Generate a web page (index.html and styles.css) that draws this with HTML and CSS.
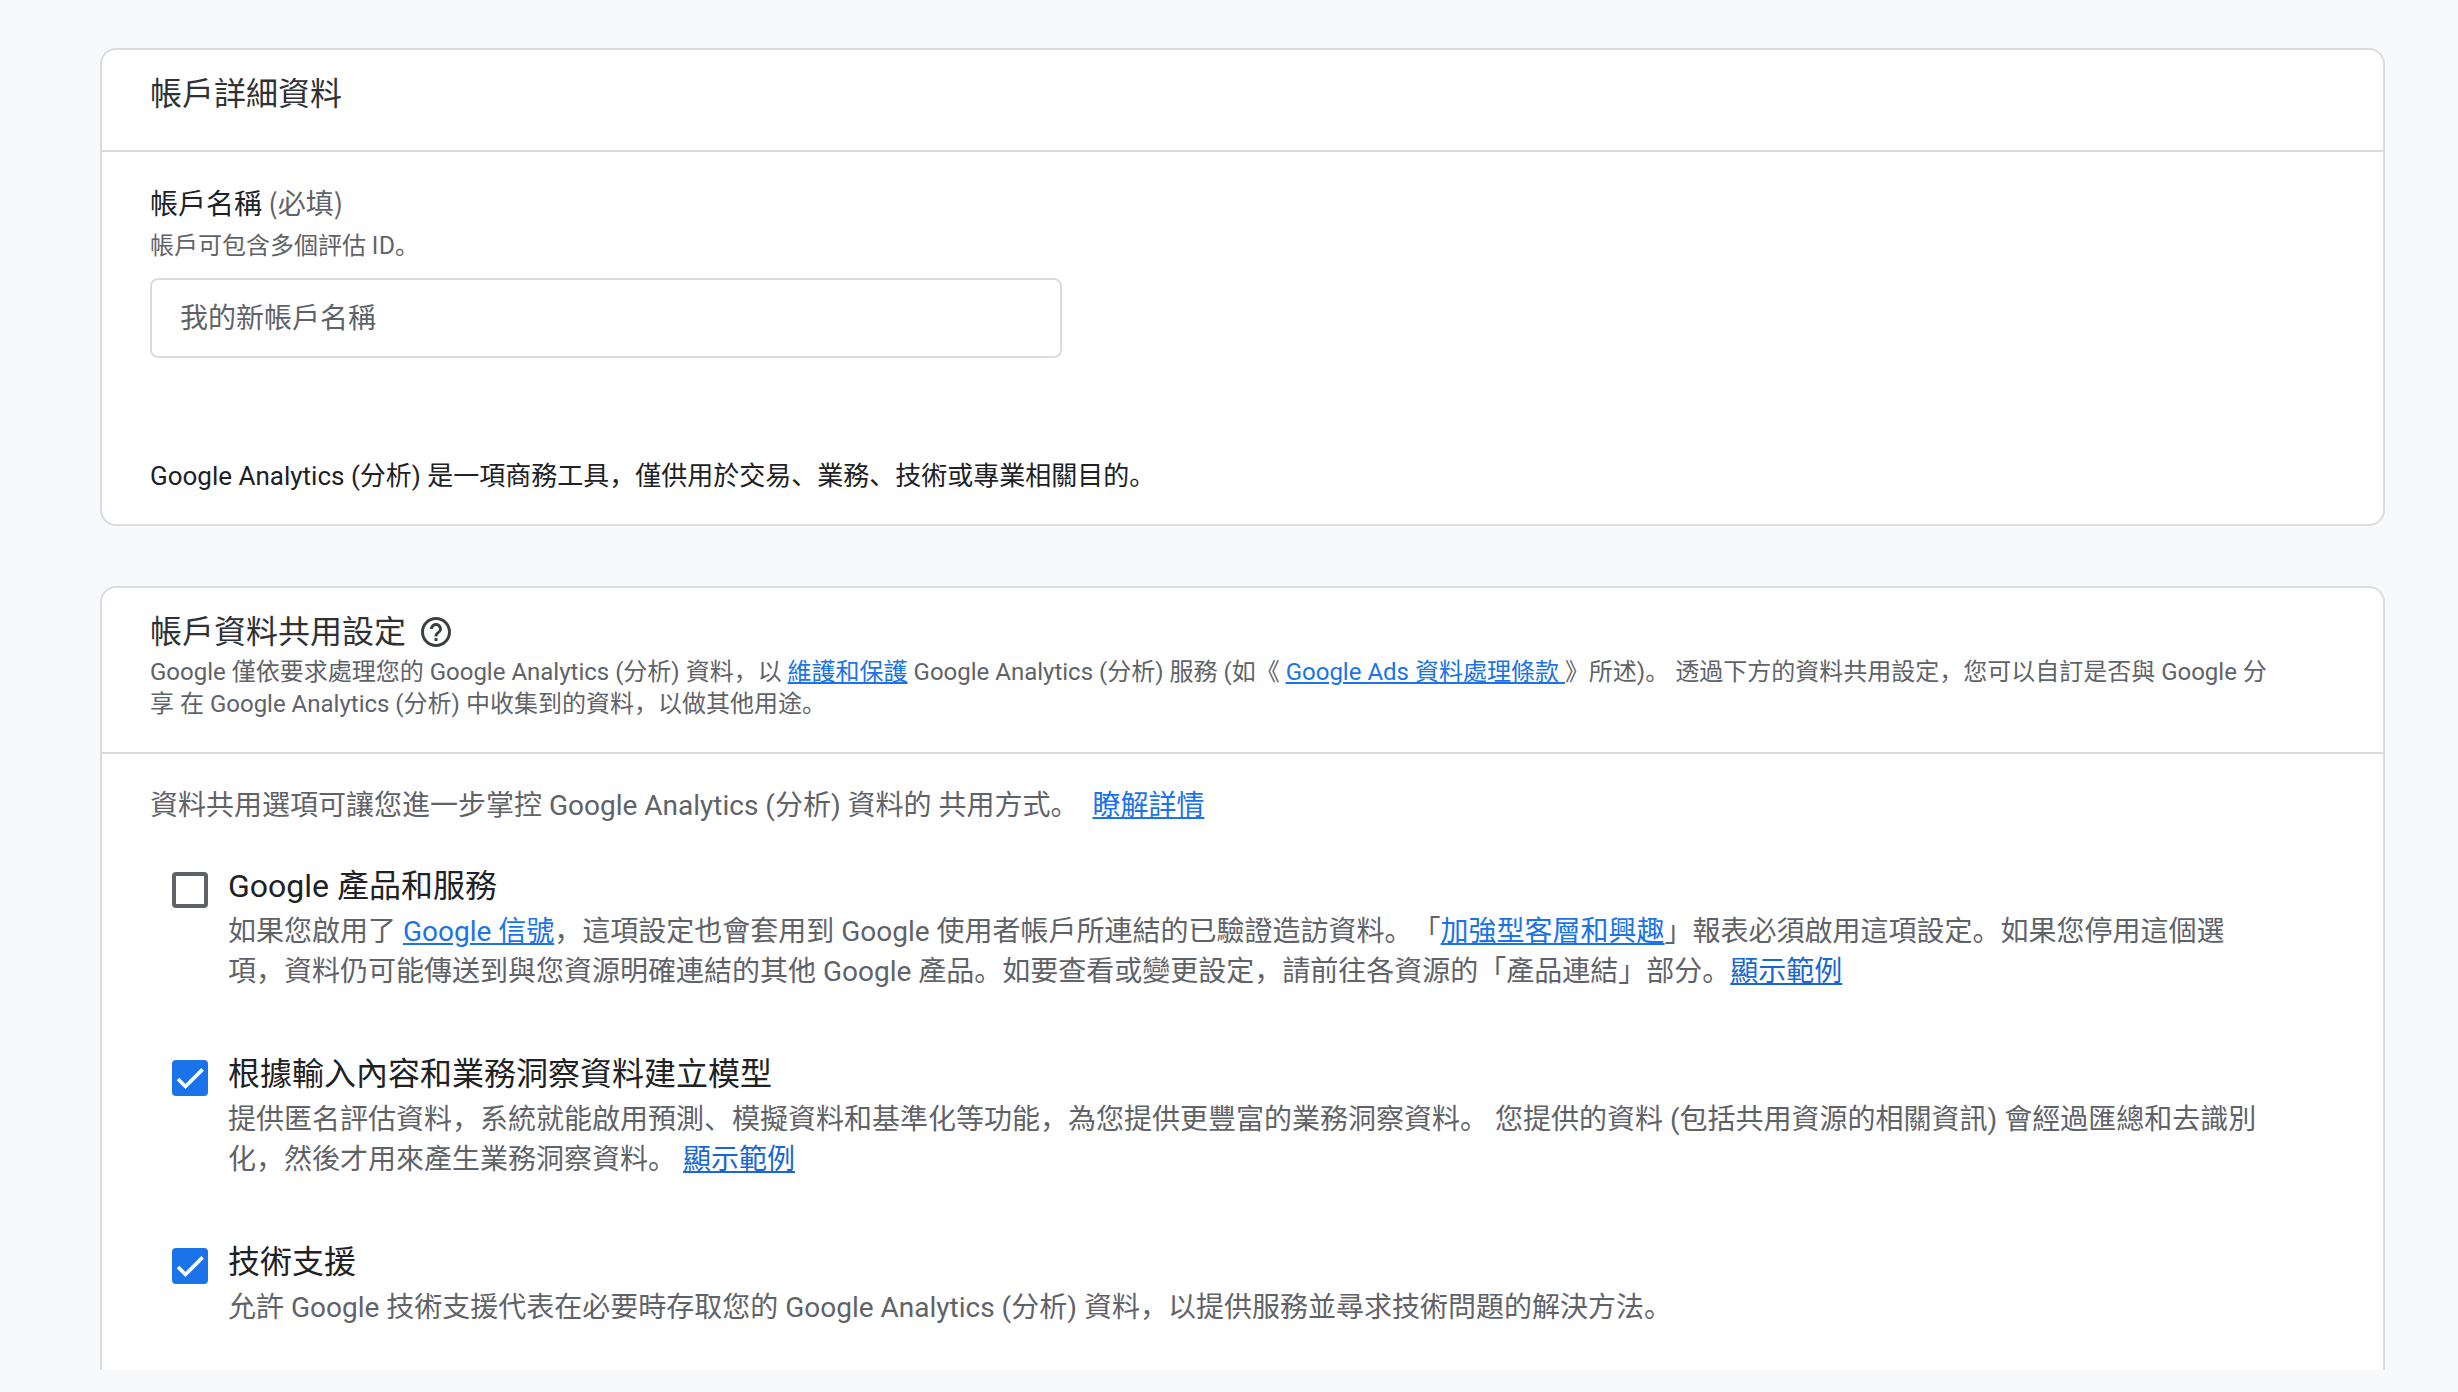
FILE: index.html
```html
<!DOCTYPE html>
<html lang="zh-Hant">
<head>
<meta charset="utf-8">
<meta name="viewport" content="width=device-width, initial-scale=1">
<title>帳戶詳細資料</title>
<link rel="stylesheet" href="styles.css">
</head>
<body>
<main class="page">
  <section class="card">
    <header class="card-header">
      <h2 class="card-title">帳戶詳細資料</h2>
    </header>
    <div class="card-body account">
      <label class="field-label" for="account-name">帳戶名稱 <span class="required">(必填)</span></label>
      <p class="field-hint" id="account-hint">帳戶可包含多個評估 ID。</p>
      <input class="text-input" id="account-name" type="text" placeholder="我的新帳戶名稱" aria-describedby="account-hint">
      <p class="notice">Google Analytics (分析) 是一項商務工具，僅供用於交易、業務、技術或專業相關目的。</p>
    </div>
  </section>

  <section class="card card-open">
    <header class="card-header sharing-header">
      <h2 class="card-title">帳戶資料共用設定
        <button class="help" type="button" aria-label="說明">
          <svg class="help-icon" viewBox="0 0 24 24" aria-hidden="true"><path d="M11 18h2v-2h-2v2zm1-16C6.48 2 2 6.48 2 12s4.48 10 10 10 10-4.48 10-10S17.52 2 12 2zm0 18c-4.41 0-8-3.59-8-8s3.59-8 8-8 8 3.59 8 8-3.59 8-8 8zm0-14c-2.21 0-4 1.79-4 4h2c0-1.1.9-2 2-2s2 .9 2 2c0 2-3 1.75-3 5h2c0-2.25 3-2.5 3-5 0-2.21-1.79-4-4-4z"/></svg>
        </button>
      </h2>
      <p class="card-desc">Google 僅依要求處理您的 Google Analytics (分析) 資料，以 <a class="link" href="#">維護和保護</a> Google Analytics (分析) 服務 (如《 <a class="link" href="#">Google Ads 資料處理條款 </a>》所述)。 透過下方的資料共用設定，您可以自訂是否與 Google 分享 在 Google Analytics (分析) 中收集到的資料，以做其他用途。</p>
    </header>
    <div class="card-body sharing">
      <p class="intro">資料共用選項可讓您進一步掌控 Google Analytics (分析) 資料的 共用方式。 &nbsp;<a class="link" href="#">瞭解詳情</a></p>
      <ul class="options">
        <li class="option">
          <input class="checkbox" type="checkbox" id="opt-products">
          <div class="option-text">
            <label class="option-title" for="opt-products">Google 產品和服務</label>
            <p class="option-desc">如果您啟用了 <a class="link" href="#">Google 信號</a>，這項設定也會套用到 Google 使用者帳戶所連結的已驗證造訪資料。「<a class="link" href="#">加強型客層和興趣</a>」報表必須啟用這項設定。如果您停用這個選項，資料仍可能傳送到與您資源明確連結的其他 Google 產品。如要查看或變更設定，請前往各資源的「產品連結」部分。<a class="link link-dark" href="#">顯示範例</a></p>
          </div>
        </li>
        <li class="option">
          <input class="checkbox" type="checkbox" id="opt-modeling" checked>
          <div class="option-text">
            <label class="option-title" for="opt-modeling">根據輸入內容和業務洞察資料建立模型</label>
            <p class="option-desc">提供匿名評估資料，系統就能啟用預測、模擬資料和基準化等功能，為您提供更豐富的業務洞察資料。 您提供的資料 (包括共用資源的相關資訊) 會經過匯總和去識別化，然後才用來產生業務洞察資料。 <a class="link link-dark" href="#">顯示範例</a></p>
          </div>
        </li>
        <li class="option">
          <input class="checkbox" type="checkbox" id="opt-support" checked>
          <div class="option-text">
            <label class="option-title" for="opt-support">技術支援</label>
            <p class="option-desc">允許 Google 技術支援代表在必要時存取您的 Google Analytics (分析) 資料，以提供服務並尋求技術問題的解決方法。</p>
          </div>
        </li>
      </ul>
    </div>
  </section>
</main>
</body>
</html>
```
FILE: styles.css
```css
* {
  box-sizing: border-box;
}

body {
  margin: 0;
  background: #f8f9fb;
  color: #202124;
  font-family: Roboto, "Noto Sans CJK SC", sans-serif;
  font-size: 28px;
  line-height: 40px;
  /* keep commas and full stops at the lower left of their cell */
  font-feature-settings: "locl" 0;
  text-spacing-trim: space-all;
}

h2,
p,
ul {
  margin: 0;
  padding: 0;
}

.page {
  display: flex;
  flex-direction: column;
  gap: 60px;
  padding: 48px 73px 22px 100px;
}

.card {
  background: #fff;
  border: 2px solid #dadce0;
  border-radius: 16px;
}

.card-open {
  border-bottom: 0;
  border-radius: 16px 16px 0 0;
}

.card-header {
  padding: 24px 48px 36px;
  border-bottom: 2px solid #dadce0;
}

.sharing-header {
  padding-right: 104px;
  padding-bottom: 32px;
}

.card-title {
  display: flex;
  align-items: center;
  gap: 12px;
  color: #303134;
  font-size: 32px;
  font-weight: 400;
}

.help {
  display: flex;
  padding: 0;
  border: 0;
  background: none;
  color: #3c4043;
  cursor: pointer;
}

.help-icon {
  width: 36px;
  height: 36px;
  fill: currentColor;
}

.card-desc {
  margin-top: 4px;
  color: #5f6368;
  font-size: 24px;
  line-height: 32px;
}

.card-body {
  display: flex;
  flex-direction: column;
  padding: 30px 48px 28px;
}

.required,
.field-hint,
.intro,
.option-desc {
  color: #5f6368;
}

.field-label,
.field-hint {
  font-family: "Noto Sans CJK SC", sans-serif;
}

.field-hint {
  margin-top: 4px;
  font-size: 24px;
  line-height: 36px;
}

.text-input {
  width: 100%;
  max-width: 912px;
  height: 80px;
  margin-top: 16px;
  padding: 0 28px;
  border: 2px solid #dadce0;
  border-radius: 8px;
  background: #fff;
  color: #202124;
  font: inherit;
  font-feature-settings: inherit;
}

.text-input::placeholder {
  color: #5f6368;
  opacity: 1;
}

.notice {
  margin-top: 98px;
  font-size: 26px;
}

.sharing {
  padding-top: 32px;
  padding-bottom: 42px;
}

.options {
  display: flex;
  flex-direction: column;
  gap: 58px;
  margin-top: 36px;
  padding: 0 70px 0 22px;
  list-style: none;
}

.option {
  display: flex;
  gap: 20px;
}

.checkbox {
  flex: none;
  width: 36px;
  height: 36px;
  margin: 10px 0 0;
  appearance: none;
  border: 4px solid #5f6368;
  border-radius: 4px;
  background: #fff;
}

.checkbox:checked {
  border-color: #1a73e8;
  background: #1a73e8 url("data:image/svg+xml,%3Csvg xmlns='http://www.w3.org/2000/svg' viewBox='0 0 24 24'%3E%3Cpath fill='none' stroke='white' stroke-width='3.12' d='M1.73 12.91 8.1 19.28 22.79 4.59'/%3E%3C/svg%3E") center / 28px no-repeat;
}

.option-text {
  flex: 1;
  min-width: 0;
}

.option-title {
  display: block;
  font-size: 32px;
  line-height: 48px;
}

.option-desc {
  margin-top: 2px;
}

.link {
  color: #1a73e8;
  text-decoration: underline;
}

.link-dark {
  color: #1967d2;
}
```
